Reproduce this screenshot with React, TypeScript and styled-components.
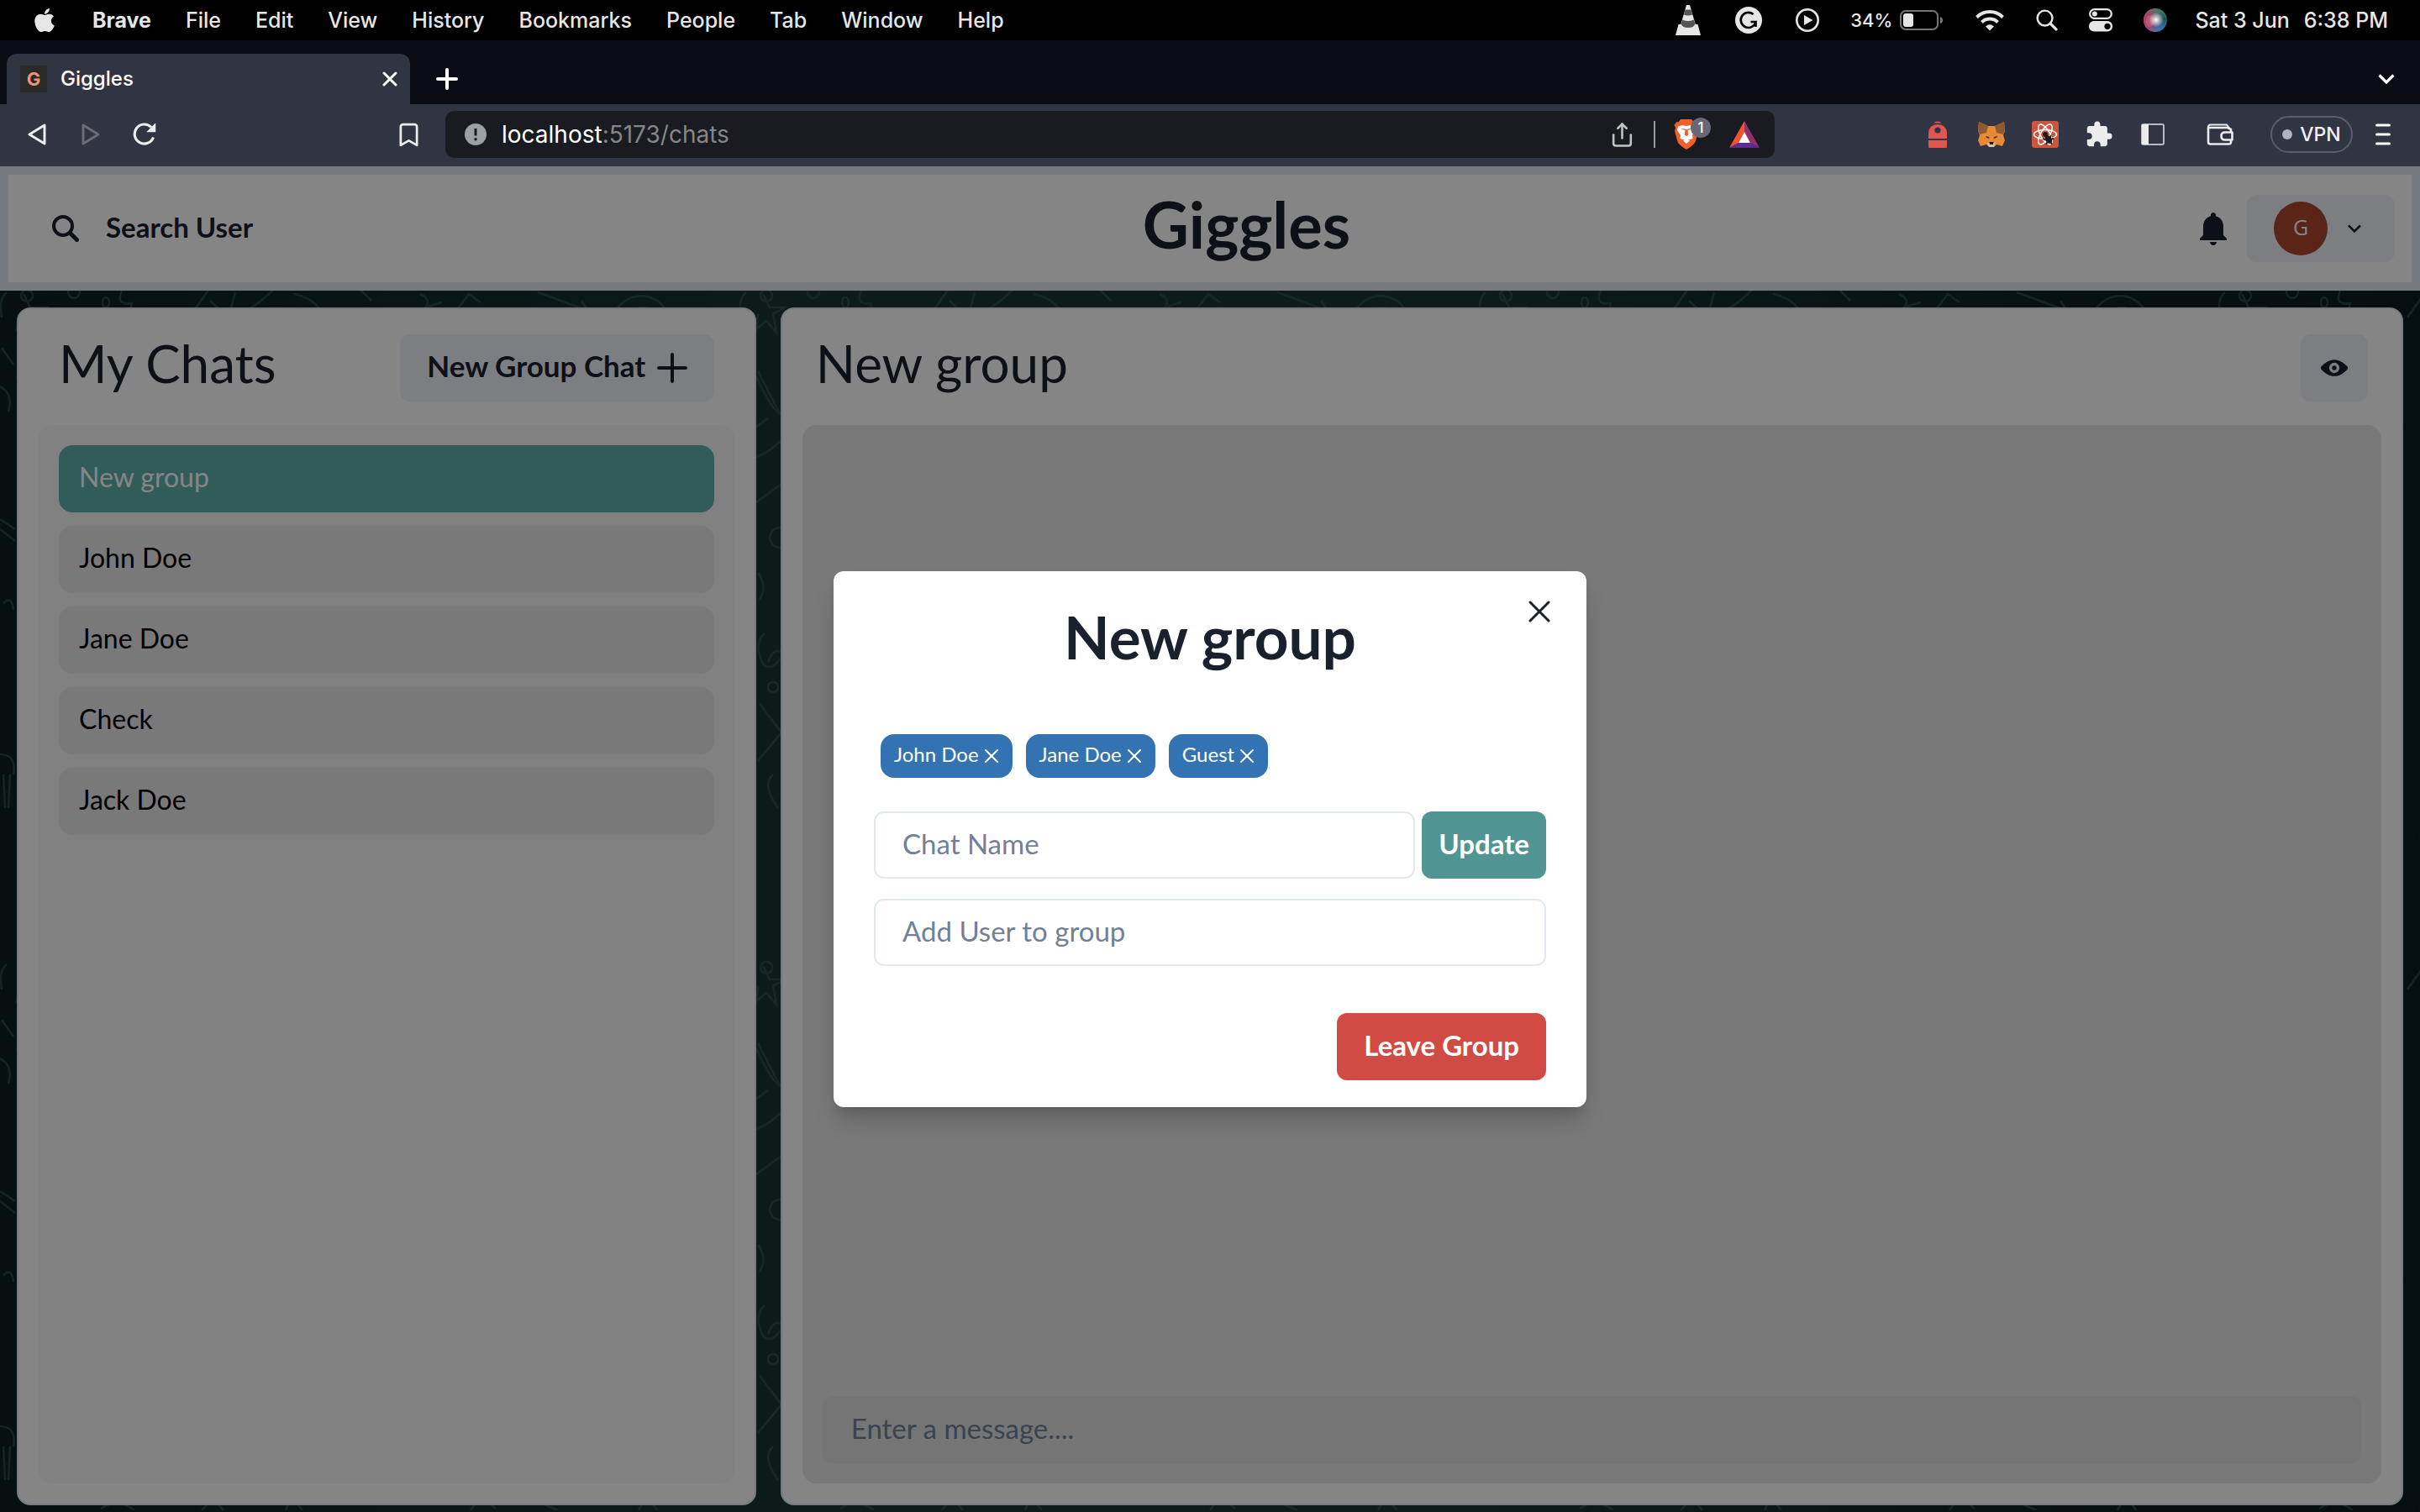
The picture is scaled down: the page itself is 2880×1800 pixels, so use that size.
import React from "react";
import styled, { createGlobalStyle } from "styled-components";
import { FaApple } from "react-icons/fa";
import { MdExtension } from "react-icons/md";
import { Bookmark, Share } from "lucide-react";

const ui = `Inter, "Liberation Sans", sans-serif`;
const brand = `Lato, "Open Sans", sans-serif`;

const GlobalStyle = createGlobalStyle`
  *, *::before, *::after { box-sizing: border-box; }
  body { margin: 0; background: #0b0b15; font-family: ${brand}; color: #1a202c; }
  button, input { font: inherit; color: inherit; border: 0; margin: 0; padding: 0; background: none; }
  h1, h2, ul { margin: 0; padding: 0; }
  svg { display: block; flex: none; }
`;

/* ---------- shell ---------- */

const Shell = styled.div`
  display: flex;
  flex-direction: column;
  min-height: 100vh;
`;

const MenuBar = styled.nav`
  display: flex;
  align-items: center;
  justify-content: space-between;
  height: 48px;
  padding: 0 38px 0 37px;
  background: #000;
  color: #e6e6e6;
  font: 500 25px/30px ${ui};
`;

const MenuGroup = styled.div<{ $gap: number }>`
  display: flex;
  align-items: center;
  gap: ${(p) => p.$gap}px;
`;

const MenuItem = styled.button<{ $strong?: boolean }>`
  font-weight: ${(p) => (p.$strong ? 700 : 500)};
  white-space: nowrap;
`;

const Battery = styled.span`
  display: flex;
  align-items: center;
  gap: 9px;
  font-size: 22px;
`;

const TabStrip = styled.div`
  display: flex;
  align-items: flex-end;
  height: 76px;
  padding: 0 16px 0 8px;
  background: #0b0b15;
  color: #fff;
`;

const Tab = styled.div`
  display: flex;
  align-items: center;
  width: 480px;
  height: 60px;
  padding: 0 4px 0 16px;
  gap: 16px;
  border-radius: 12px 12px 0 0;
  background: #313442;
  font: 500 24px/30px ${ui};
`;

const Favicon = styled.span`
  display: grid;
  place-items: center;
  width: 32px;
  height: 32px;
  background: #2a2a28;
  color: #ee9474;
  font: 700 22px/32px ${ui};
`;

const TabTitle = styled.span`
  flex: 1;
`;

const IconButton = styled.button<{ $w?: number; $h?: number }>`
  display: grid;
  place-items: center;
  width: ${(p) => p.$w ?? 64}px;
  height: ${(p) => p.$h ?? 56}px;
`;

const Spacer = styled.span`
  flex: 1;
`;

const Toolbar = styled.div`
  display: grid;
  grid-template-columns: 530px 1fr 768px;
  padding: 8px 0 10px;
  background: #313442;
  color: #ececec;
`;

const ToolbarSide = styled.div<{ $end?: boolean }>`
  display: flex;
  align-items: center;
  justify-content: ${(p) => (p.$end ? "flex-end" : "flex-start")};
  padding: 0 ${(p) => (p.$end ? 16 : 12)}px;
`;

const AddressBar = styled.div`
  display: flex;
  align-items: center;
  height: 56px;
  padding: 0 18px 0 23px;
  border-radius: 10px;
  background: #1a1b20;
`;

const AddressText = styled.button`
  flex: 1;
  padding-left: 18px;
  text-align: left;
  color: #85868a;
  font: 400 28px/36px ${ui};
`;

const Host = styled.span`
  color: #fff;
`;

const Divider = styled.span`
  width: 2px;
  height: 32px;
  margin: 0 22px 0 12px;
  background: #9c9ca0;
`;

const ShieldButton = styled.button`
  position: relative;
  margin-right: 36px;
`;

const ShieldCount = styled.span`
  position: absolute;
  left: 20px;
  top: -2px;
  width: 24px;
  height: 24px;
  border-radius: 12px;
  background: #666875;
  color: #fff;
  font: 500 17px/24px ${ui};
  text-align: center;
`;

const VpnButton = styled.button`
  display: flex;
  align-items: center;
  justify-content: center;
  gap: 9px;
  width: 98px;
  height: 44px;
  margin: 0 8px 0 28px;
  border: 2px solid #5c5e6c;
  border-radius: 22px;
  color: #f0f0ff;
  font: 500 23px/30px ${ui};
`;

const VpnDot = styled.span`
  width: 12px;
  height: 12px;
  border-radius: 50%;
  background: #b0b1c2;
`;

const Gap = styled.span<{ $w: number }>`
  width: ${(p) => p.$w}px;
`;

/* ---------- page ---------- */

const Page = styled.div`
  position: relative;
  display: flex;
  flex: 1;
  flex-direction: column;
  background: linear-gradient(90deg, #0c1f22 0%, #193434 33%, #1a3535 60%, #0d2022 88%, #0b1c20 100%);
`;

const Wallpaper = styled.svg`
  position: absolute;
  inset: 0;
  width: 100%;
  height: 100%;
`;

const Header = styled.header`
  position: relative;
  display: flex;
  align-items: center;
  justify-content: space-between;
  height: 148px;
  padding: 0 20px;
  border: 10px solid #e2e8f0;
  background: #fff;
`;

const SearchButton = styled.button`
  display: flex;
  align-items: center;
  height: 80px;
  padding: 0 32px;
  font-size: 33px;
  font-weight: 700;
  line-height: 48px;
`;

const SearchLabel = styled.span`
  padding: 0 32px 4px;
`;

const Logo = styled.h1`
  padding-bottom: 10px;
  font-size: 76px;
  font-weight: 700;
  line-height: 96px;
`;

const HeaderActions = styled.div`
  display: flex;
  align-items: center;
  gap: 16px;
  padding-left: 8px;
`;

const UserButton = styled.button`
  display: flex;
  align-items: center;
  gap: 16px;
  height: 80px;
  padding: 0 32px;
  border-radius: 12px;
  background: #edf2f7;
`;

const Avatar = styled.span`
  width: 64px;
  height: 64px;
  border-radius: 50%;
  background: #ad452c;
  color: #fff;
  font: 400 25px/60px "Open Sans", sans-serif;
  text-align: center;
`;

const Panels = styled.main`
  position: relative;
  display: flex;
  flex: 1;
  justify-content: space-between;
  padding: 20px 20px 8px;
`;

const Panel = styled.section<{ $share: number }>`
  display: flex;
  flex-direction: column;
  width: ${(p) => p.$share}%;
  padding: 24px;
  border: 2px solid #e2e8f0;
  border-radius: 16px;
  background: #fff;
`;

const PanelHead = styled.div<{ $side: number }>`
  display: flex;
  align-items: center;
  justify-content: space-between;
  height: 114px;
  padding: 0 ${(p) => p.$side}px 22px;
`;

const PanelTitle = styled.h2`
  padding-bottom: 12px;
  font-size: 62px;
  font-weight: 400;
  line-height: 72px;
`;

const GrayButton = styled.button<{ $pad: number }>`
  display: flex;
  align-items: center;
  gap: 14px;
  height: 80px;
  padding: 0 ${(p) => p.$pad}px;
  border-radius: 12px;
  background: #edf2f7;
  font-size: 35px;
  font-weight: 700;
  line-height: 48px;
`;

const ButtonText = styled.span`
  padding-bottom: 6px;
`;

const ChatList = styled.ul`
  display: flex;
  flex: 1;
  flex-direction: column;
  gap: 16px;
  padding: 24px;
  border-radius: 16px;
  background: #f8f8f8;
  list-style: none;
`;

const ChatRow = styled.button<{ $active?: boolean }>`
  display: block;
  width: 100%;
  height: 80px;
  padding: 0 24px 4px;
  border-radius: 16px;
  background: ${(p) => (p.$active ? "#60b1ab" : "#e8e8e8")};
  color: ${(p) => (p.$active ? "#fff" : "#000")};
  font-size: 32px;
  line-height: 48px;
  text-align: left;
`;

const Messages = styled.div`
  display: flex;
  flex: 1;
  flex-direction: column;
  justify-content: flex-end;
  padding: 24px;
  border-radius: 16px;
  background: #e8e8e8;
`;

const Field = styled.input<{ $filled?: boolean }>`
  flex: ${(p) => (p.$filled ? "none" : "1")};
  width: 100%;
  min-width: 0;
  height: 80px;
  padding: 0 32px 4px;
  border: 2px solid ${(p) => (p.$filled ? "#e0e0e0" : "#e2e8f0")};
  border-radius: 12px;
  background: ${(p) => (p.$filled ? "#e0e0e0" : "#fff")};
  font-size: 33px;
  line-height: 48px;
  &::placeholder {
    color: #718096;
    opacity: 1;
  }
`;

/* ---------- dialog ---------- */

const Overlay = styled.div`
  position: absolute;
  inset: 0;
  display: grid;
  place-items: center;
  background: rgba(0, 0, 0, 0.48);
`;

const Dialog = styled.section`
  position: relative;
  width: 896px;
  padding: 24px 48px 32px;
  border-radius: 12px;
  background: #fff;
  box-shadow: 0 20px 30px -6px rgba(0, 0, 0, 0.2), 0 8px 12px -4px rgba(0, 0, 0, 0.1);
`;

const DialogTitle = styled.h2`
  font-size: 71px;
  font-weight: 700;
  line-height: 108px;
  text-align: center;
`;

const CloseButton = styled.button`
  position: absolute;
  top: 16px;
  right: 24px;
  display: grid;
  place-items: center;
  width: 64px;
  height: 64px;
`;

const Chips = styled.div`
  display: flex;
  gap: 16px;
  padding: 62px 8px 40px;
`;

const Chip = styled.button`
  display: flex;
  align-items: center;
  gap: 6px;
  height: 52px;
  padding: 0 16px;
  border-radius: 16px;
  background: #3373b1;
  color: #fff;
  font-size: 24px;
  line-height: 36px;
`;

const ChipText = styled.span`
  padding-bottom: 4px;
`;

const FieldRow = styled.div<{ $after: number }>`
  display: flex;
  gap: 8px;
  padding-bottom: ${(p) => p.$after}px;
`;

const SolidButton = styled.button<{ $tone: string; $pad: number }>`
  height: 80px;
  padding: 0 ${(p) => p.$pad}px 4px;
  border-radius: 12px;
  background: ${(p) => p.$tone};
  color: #fff;
  font-size: 33px;
  font-weight: 700;
  line-height: 48px;
  white-space: nowrap;
`;

const DialogFooter = styled.div`
  display: flex;
  justify-content: flex-end;
`;

/* ---------- drawings ---------- */

const Cross = ({ size, width }: { size: number; width: number }) => (
  <svg width={size} height={size} viewBox={`0 0 ${size} ${size}`} stroke="currentColor" strokeWidth={width} strokeLinecap="round">
    <path d={`M2 2L${size - 2} ${size - 2}M${size - 2} 2L2 ${size - 2}`} />
  </svg>
);

const PlusGlyph = ({ size, width }: { size: number; width: number }) => (
  <svg width={size} height={size} viewBox={`0 0 ${size} ${size}`} stroke="currentColor" strokeWidth={width} strokeLinecap="round">
    <path d={`M${size / 2} 2V${size - 2}M2 ${size / 2}H${size - 2}`} />
  </svg>
);

const Lens = ({ size, width }: { size: number; width: number }) => (
  <svg width={size} height={size} viewBox="0 0 32 32" fill="none" stroke="currentColor" strokeWidth={width} strokeLinecap="round">
    <circle cx="13" cy="13" r="11" />
    <path d="M21.5 21.5L29.5 29.5" strokeWidth={width + 1} />
  </svg>
);

const VlcIcon = () => (
  <svg width="32" height="38" viewBox="0 0 32 38">
    <path d="M14 1h4l7 24H7z" fill="#e6e6e6" />
    <path d="M12.600 6.500h6.800l1.700 6q-5 2-10.200 0zM9.300 18.500q6.600 3 13.400 0l2.500 8q-9 7-18.400 0z" fill="#555" />
    <path d="M4.500 24H8q1 4 8 4t8-4h3.500L31 37H1z" fill="#e6e6e6" />
  </svg>
);

const GrammarlyIcon = () => (
  <svg width="32" height="32" viewBox="0 0 32 32" fill="none">
    <circle cx="16" cy="16" r="16" fill="#e6e6e6" />
    <path d="M21.500 9A9 9 0 1 0 24.500 18H18.500M24.500 18V24" stroke="#000" strokeWidth="2.600" />
  </svg>
);

const PlayIcon = () => (
  <svg width="28" height="28" viewBox="0 0 28 28">
    <circle cx="14" cy="14" r="12.700" fill="none" stroke="#e6e6e6" strokeWidth="2.600" />
    <path d="M10 8l10.500 6L10 20z" fill="#e6e6e6" />
  </svg>
);

const BatteryIcon = () => (
  <svg width="52" height="24" viewBox="0 0 52 24">
    <rect x="1" y="1" width="44" height="22" rx="6" fill="none" stroke="#777" strokeWidth="2" />
    <rect x="4" y="4" width="12" height="16" rx="3" fill="#e6e6e6" />
    <path d="M48 8q3 1 3 4t-3 4z" fill="#777" />
  </svg>
);

const WifiIcon = () => (
  <svg width="36" height="26" viewBox="0 0 36 26" fill="none" stroke="#e6e6e6" strokeWidth="4">
    <path d="M2.500 9.500a22 22 0 0 1 31 0" />
    <path d="M8.500 15.500a13.500 13.500 0 0 1 19 0" />
    <path d="M18 25.500l-5-5q5-4.500 10 0z" fill="#e6e6e6" stroke="none" />
  </svg>
);

const ControlIcon = () => (
  <svg width="28" height="28" viewBox="0 0 28 28">
    <rect x="1.200" y="1.200" width="25.600" height="10.600" rx="5.300" fill="none" stroke="#e6e6e6" strokeWidth="2.200" />
    <circle cx="6.800" cy="6.500" r="3" fill="#e6e6e6" />
    <rect x="0" y="15" width="28" height="12.500" rx="6" fill="#e6e6e6" />
    <circle cx="22" cy="21.300" r="3.600" fill="#000" />
  </svg>
);

const SiriIcon = () => (
  <svg width="28" height="28" viewBox="0 0 28 28">
    <defs>
      <radialGradient id="siriGlow"><stop offset="0" stopColor="#fff" /><stop offset="1" stopColor="#fff" stopOpacity="0" /></radialGradient>
      <linearGradient id="siriRight" x1="0" y1="0" x2="0" y2="1"><stop offset="0" stopColor="#3f8c6e" /><stop offset=".45" stopColor="#244f58" /><stop offset="1" stopColor="#3b7fd0" /></linearGradient>
      <linearGradient id="siriLeft"><stop offset="0" stopColor="#c43a60" /><stop offset=".7" stopColor="#c43a60" stopOpacity="0" /></linearGradient>
    </defs>
    <circle cx="14" cy="14" r="14" fill="url(#siriRight)" />
    <circle cx="14" cy="14" r="14" fill="url(#siriLeft)" />
    <ellipse cx="7.500" cy="15" rx="5" ry="7" fill="#d0607f" opacity=".6" />
    <circle cx="15" cy="13.500" r="9" fill="url(#siriGlow)" />
  </svg>
);

const BackIcon = ({ dim }: { dim?: boolean }) => (
  <svg width="24" height="28" viewBox="0 0 24 28" fill="none" stroke={dim ? "#6b6d78" : "#ececec"} strokeWidth="3" strokeLinejoin="round">
    <path d={dim ? "M3 3V25L21 14z" : "M21 3V25L3 14z"} />
  </svg>
);

const ReloadIcon = () => (
  <svg width="28" height="28" viewBox="0 0 28 28" fill="none" stroke="#ececec" strokeWidth="3.200">
    <path d="M24.500 17.500A11.500 11.500 0 1 1 22 5.500" />
    <path d="M26.500 2V10.500H18z" fill="#ececec" stroke="#ececec" strokeWidth="1.500" />
  </svg>
);

const InfoIcon = () => (
  <svg width="26" height="26" viewBox="0 0 26 26">
    <circle cx="13" cy="13" r="13" fill="#9aa0a6" />
    <path d="M13 6V14.500" stroke="#1a1b20" strokeWidth="3" />
    <circle cx="13" cy="18.700" r="1.800" fill="#1a1b20" />
  </svg>
);

const LionIcon = () => (
  <svg width="30" height="36" viewBox="0 0 30 36">
    <path d="M8 0h13l3 3.500 3-.3 2.500 4L28 10l1 4-3.500 13q-2 4-10.500 9Q6.500 31 4.500 27L1 14l1-4L.5 7 3 3.300l2.500.2z" fill="#f0602b" />
    <path d="M5 8.500l5-1.500 5 1 5-1 5 1.500 1 4.500-4 6 .5 4-4.500 1.500-3-1.500-3 1.500-4.500-1.500.5-4-4-6zM11 25.500l4-2.500 4 2.500-4 3.500z" fill="#fff" />
    <path d="M8 11.500l5.500 1.500-.8 5.500 2.300 1.500 2.300-1.500-.8-5.500 5.500-1.500-4-.3-3 1-3-1z" fill="#f0602b" />
  </svg>
);

const TriangleIcon = () => (
  <svg width="36" height="32" viewBox="0 0 36 32">
    <path d="M18 0L0 32l11-6 7-13z" fill="#f4532e" />
    <path d="M18 0l18 32-11-6-7-13z" fill="#92306b" />
    <path d="M0 32h36l-11-6H11z" fill="#5d2d91" />
    <path d="M18 13l7 13H11z" fill="#fff" />
  </svg>
);

const RocketIcon = () => (
  <svg width="22" height="32" viewBox="0 0 22 32">
    <path d="M6 2.500Q11-1.500 16 2.500zM0 21V14Q1 4 11 4t11 10v7zM0 23h22v8q0 1-1 1H1q-1 0-1-1z" fill="#e0554f" />
    <circle cx="11" cy="11" r="3.600" fill="#313442" />
  </svg>
);

const FoxIcon = () => (
  <svg width="32" height="30" viewBox="0 0 32 30">
    <path d="M1 0l11 5h8l11-5 1 11-2 5 2 6-3 7-7-2-3 3h-6l-3-3-7 2-3-7 2-6-2-5z" fill="#e58a35" />
    <path d="M1 0l11 5-2 8-8 2-2-5zM31 0L20 5l2 8 8 2 2-5z" fill="#8f5a31" />
    <path d="M9 17l4 1 .5 2-3.500-1zM23 17l-4 1-.5 2 3.500-1z" fill="#42342c" />
    <path d="M11 25h10l-2 5h-6z" fill="#d5c3ae" />
    <path d="M13.500 24h5l-.5 3h-4z" fill="#161616" />
  </svg>
);

const ReactToolIcon = () => (
  <svg width="32" height="32" viewBox="0 0 32 32" fill="none">
    <rect width="32" height="32" rx="3" fill="#cd5540" />
    <g stroke="#fff" strokeWidth="1.500">
      <ellipse cx="16" cy="16" rx="13.500" ry="5.500" />
      <ellipse cx="16" cy="16" rx="13.500" ry="5.500" transform="rotate(60 16 16)" />
      <ellipse cx="16" cy="16" rx="13.500" ry="5.500" transform="rotate(120 16 16)" />
    </g>
    <circle cx="16" cy="16" r="3" fill="#1b1b1b" />
    <g stroke="#1b1b1b" strokeWidth="1.800">
      <ellipse cx="20" cy="22" rx="2.500" ry="4" transform="rotate(-35 20 22)" fill="#1b1b1b" />
      <path d="M13 21l5 2M17 28l2-4M24 28l-2-4M26 21l-5 1M23 17l-2 4" />
    </g>
  </svg>
);

const SidebarIcon = () => (
  <svg width="28" height="26" viewBox="0 0 28 26">
    <rect x="1" y="1" width="26" height="24" rx="2" fill="none" stroke="#b9bac0" strokeWidth="2" />
    <path d="M1 1h8v24H1z" fill="#ececec" />
  </svg>
);

const WalletIcon = () => (
  <svg width="32" height="26" viewBox="0 0 32 26" fill="none" stroke="#ececec" strokeWidth="2.600" strokeLinejoin="round">
    <path d="M29 10V7L25 5H2V22q0 2.500 2.500 2.500H26.500q2.500 0 2.500-2.500V19.500" />
    <path d="M2 5.500V4q0-2.500 3-2.500H24l3 4" strokeWidth="2" />
    <path d="M30.500 10.500H22q-4.500 0-4.500 4.500t4.500 4.500h8.500z" />
  </svg>
);

const HamburgerIcon = () => (
  <svg width="18" height="26" viewBox="0 0 18 26" stroke="#fff" strokeWidth="3" strokeLinecap="round">
    <path d="M1.500 2h15M1.500 13h15M1.500 24h15" />
  </svg>
);

const BellIcon = () => (
  <svg width="48" height="48" viewBox="0 0 24 24" fill="currentColor">
    <path d="M12 22c1.100 0 2-.9 2-2h-4c0 1.100.89 2 2 2zm6-6v-5c0-3.070-1.640-5.640-4.500-6.320V4c0-.83-.67-1.500-1.500-1.500s-1.500.67-1.500 1.500v.68C7.630 5.360 6 7.920 6 11v5l-2 2v1h16v-1l-2-2z" />
  </svg>
);

const ChevronIcon = () => (
  <svg width="32" height="32" viewBox="0 0 24 24" fill="currentColor">
    <path d="M16.590 8.590L12 13.170 7.410 8.590 6 10l6 6 6-6z" />
  </svg>
);

const EyeIcon = () => (
  <svg width="32" height="32" viewBox="0 0 24 24" fill="currentColor">
    <path d="M23.432,10.524C20.787,7.614,16.4,4.538,12,4.6,7.6,4.537,3.213,7.615.568,10.524a2.211,2.211,0,0,0,0,2.948C3.182,16.351,7.507,19.4,11.839,19.4h.308c4.347,0,8.671-3.049,11.288-5.929A2.21,2.21,0,0,0,23.432,10.524ZM7.4,12A4.6,4.6,0,1,1,12,16.6,4.6,4.6,0,0,1,7.4,12Z" />
    <circle cx="12" cy="12" r="2" />
  </svg>
);

const Doodles = () => (
  <Wallpaper aria-hidden="true">
    <defs>
      <pattern id="doodles" width="880" height="800" patternUnits="userSpaceOnUse">
        <g fill="none" stroke="#36575a" strokeWidth="2.500" opacity=".65">
          <path d="M8 150q-10 8-6 30M145 148q-8 18 12 15l-4 18M225 180l24-34M250 160l22 20 8-30M274 178q24-4 50-30l-8-3M350 152q24 4 36 26M430 148l12 12" />
          <circle cx="32" cy="154" r="7" /><circle cx="88" cy="150" r="7" /><ellipse cx="126" cy="162" rx="4" ry="6" />
          <path d="M500 152q14 6 6 16l20-6M540 176l18-24 14 10M640 150l60 22-8-12M730 180a34 34 0 0 1 66 0M748 180a18 18 0 0 1 34 0" />
          <path d="M28 152l8 16 18 0-14 8 4 22-12-14-12 10 2-18" />
          <path d="M22 244l26 50M20 250q18 40 30 46M20 310l14-10M20 346q16-6 30-20M20 400l30-22" />
          <circle cx="48" cy="442" r="12" />
          <path d="M22 484q12 16 2 32M30 556q-14 12-2 36 10 10 20-6M34 590q8-20 18-10M24 640l26 34-28 34M40 724q-14 12 6 40" />
          <circle cx="40" cy="620" r="6" />
          <path d="M2 216l14 20M0 262q16 8 10 30M0 420l18 12M0 432l18 14M4 520q10-10 12 8M0 700q20 0 16 24M4 724l2 40M12 724l-2 40" />
          <path d="M866 230q-8 6-6 20l16-4M864 300l14 30M870 402a8 8 0 1 0 2 0M860 520q20 10 16 40M864 640l12 10-12 18M868 730v30" />
          <path d="M120 798q20-14 40 2M240 800l14-14 12 14M340 800q6-20 20 0M430 790h40M560 800q12-20 30-2M640 790l24 10M760 800q10-22 22 0" />
        </g>
      </pattern>
    </defs>
    <rect width="100%" height="100%" fill="url(#doodles)" />
  </Wallpaper>
);

/* ---------- content ---------- */

const menus = ["File", "Edit", "View", "History", "Bookmarks", "People", "Tab", "Window", "Help"];
const chats = ["New group", "John Doe", "Jane Doe", "Check", "Jack Doe"];
const members = ["John Doe", "Jane Doe", "Guest"];

const BrowserChrome = () => (
  <>
    <MenuBar aria-label="Menu bar">
      <MenuGroup $gap={41}>
        <FaApple size={32} />
        <MenuItem $strong>Brave</MenuItem>
        {menus.map((m) => (
          <MenuItem key={m}>{m}</MenuItem>
        ))}
      </MenuGroup>
      <MenuGroup $gap={33}>
        <MenuGroup $gap={37}>
          <MenuGroup $gap={40}>
            <VlcIcon />
            <GrammarlyIcon />
            <PlayIcon />
          </MenuGroup>
          <Battery>34%<BatteryIcon /></Battery>
          <WifiIcon />
          <Lens size={26} width={3} />
          <ControlIcon />
          <SiriIcon />
        </MenuGroup>
        <MenuGroup $gap={17}>
          <span>Sat 3 Jun</span>
          <span>6:38 PM</span>
        </MenuGroup>
      </MenuGroup>
    </MenuBar>
    <TabStrip>
      <Tab>
        <Favicon>G</Favicon>
        <TabTitle>Giggles</TabTitle>
        <IconButton $w={40} aria-label="Close tab"><Cross size={18} width={3} /></IconButton>
      </Tab>
      <IconButton $w={88} $h={60} aria-label="New tab"><PlusGlyph size={26} width={4} /></IconButton>
      <Spacer />
      <IconButton $w={48} $h={60} aria-label="Search tabs">
        <svg width="20" height="12" viewBox="0 0 20 12" fill="none" stroke="#fff" strokeWidth="3.200"><path d="M1.500 1.500L10 10L18.500 1.500" /></svg>
      </IconButton>
    </TabStrip>
    <Toolbar>
      <ToolbarSide>
        <IconButton aria-label="Back"><BackIcon /></IconButton>
        <IconButton aria-label="Forward"><BackIcon dim /></IconButton>
        <IconButton aria-label="Reload"><ReloadIcon /></IconButton>
        <Spacer />
        <IconButton aria-label="Bookmark"><Bookmark size={33} strokeWidth={2} /></IconButton>
      </ToolbarSide>
      <AddressBar>
        <InfoIcon />
        <AddressText aria-label="Address"><Host>localhost</Host>:5173/chats</AddressText>
        <IconButton $w={52} aria-label="Share"><Share size={31} strokeWidth={2} color="#c4c4c8" /></IconButton>
        <Divider />
        <ShieldButton aria-label="Shields"><LionIcon /><ShieldCount>1</ShieldCount></ShieldButton>
        <TriangleIcon />
      </AddressBar>
      <ToolbarSide $end>
        <IconButton aria-label="Rocket extension"><RocketIcon /></IconButton>
        <IconButton aria-label="Wallet extension"><FoxIcon /></IconButton>
        <IconButton aria-label="React tools"><ReactToolIcon /></IconButton>
        <IconButton aria-label="Extensions"><MdExtension size={34} /></IconButton>
        <IconButton aria-label="Sidebar"><SidebarIcon /></IconButton>
        <Gap $w={16} />
        <IconButton aria-label="Wallet"><WalletIcon /></IconButton>
        <VpnButton><VpnDot />VPN</VpnButton>
        <IconButton $w={56} aria-label="Menu"><HamburgerIcon /></IconButton>
      </ToolbarSide>
    </Toolbar>
  </>
);

const GroupDialog = () => (
  <Overlay>
    <Dialog role="dialog" aria-labelledby="group-title">
      <DialogTitle id="group-title">New group</DialogTitle>
      <CloseButton aria-label="Close"><Cross size={26} width={3} /></CloseButton>
      <Chips>
        {members.map((m) => (
          <Chip key={m}>
            <ChipText>{m}</ChipText>
            <Cross size={18} width={2} />
          </Chip>
        ))}
      </Chips>
      <FieldRow $after={24}>
        <Field aria-label="Chat Name" placeholder="Chat Name" />
        <SolidButton $tone="#509593" $pad={20}>Update</SolidButton>
      </FieldRow>
      <FieldRow $after={56}>
        <Field aria-label="Add User to group" placeholder="Add User to group" />
      </FieldRow>
      <DialogFooter>
        <SolidButton $tone="#d14b45" $pad={32}>Leave Group</SolidButton>
      </DialogFooter>
    </Dialog>
  </Overlay>
);

export default function App() {
  return (
    <Shell>
      <GlobalStyle />
      <BrowserChrome />
      <Page>
        <Doodles />
        <Header>
          <SearchButton>
            <Lens size={32} width={4} />
            <SearchLabel>Search User</SearchLabel>
          </SearchButton>
          <Logo>Giggles</Logo>
          <HeaderActions>
            <IconButton $w={48} aria-label="Notifications"><BellIcon /></IconButton>
            <UserButton aria-label="Account">
              <Avatar>G</Avatar>
              <ChevronIcon />
            </UserButton>
          </HeaderActions>
        </Header>
        <Panels>
          <Panel $share={31}>
            <PanelHead $side={24}>
              <PanelTitle>My Chats</PanelTitle>
              <GrayButton $pad={32}>
                <ButtonText>New Group Chat</ButtonText>
                <PlusGlyph size={36} width={4} />
              </GrayButton>
            </PanelHead>
            <ChatList>
              {chats.map((c, i) => (
                <li key={c}>
                  <ChatRow $active={i === 0}>{c}</ChatRow>
                </li>
              ))}
            </ChatList>
          </Panel>
          <Panel $share={68}>
            <PanelHead $side={16}>
              <PanelTitle>New group</PanelTitle>
              <GrayButton $pad={24} aria-label="Group details"><EyeIcon /></GrayButton>
            </PanelHead>
            <Messages>
              <Field $filled aria-label="Enter a message" placeholder="Enter a message...." />
            </Messages>
          </Panel>
        </Panels>
        <GroupDialog />
      </Page>
    </Shell>
  );
}
